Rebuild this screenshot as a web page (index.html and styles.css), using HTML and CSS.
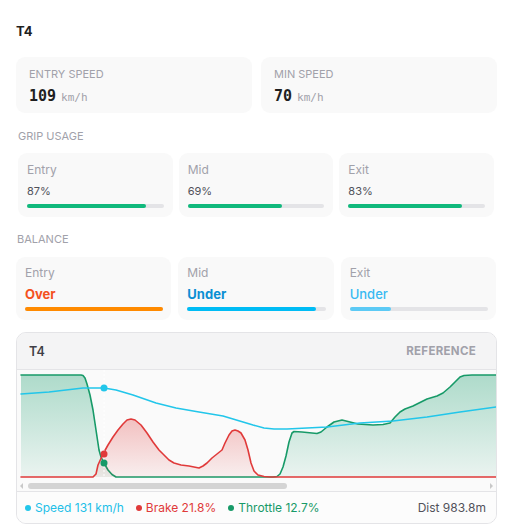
FILE: index.html
```html
<!DOCTYPE html>
<html lang="en">

<head>
    <meta charset="UTF-8">
    <title>T4 corner</title>
    <link rel="stylesheet" href="styles.css">
</head>

<body>
    <div class="page">
        <h2 class="corner-title">T4</h2>

        <div class="stats">
            <div class="stat-card">
                <div class="stat-label">ENTRY SPEED</div>
                <div class="stat-value"><b>109</b><span>km/h</span></div>
            </div>
            <div class="stat-card">
                <div class="stat-label">MIN SPEED</div>
                <div class="stat-value"><b>70</b><span>km/h</span></div>
            </div>
        </div>

        <div class="section-label">GRIP USAGE</div>
        <div class="grip-grid">
            <div class="mini-card">
                <div class="mini-label">Entry</div>
                <div class="grip-pct">87%</div>
                <div class="bar"><div class="fill green" style="width: 87%"></div></div>
            </div>
            <div class="mini-card">
                <div class="mini-label">Mid</div>
                <div class="grip-pct">69%</div>
                <div class="bar"><div class="fill green" style="width: 69%"></div></div>
            </div>
            <div class="mini-card">
                <div class="mini-label">Exit</div>
                <div class="grip-pct">83%</div>
                <div class="bar"><div class="fill green" style="width: 83%"></div></div>
            </div>
        </div>

        <div class="section-label balance-label">BALANCE</div>
        <div class="balance-grid">
            <div class="mini-card">
                <div class="mini-label">Entry</div>
                <div class="balance-value over">Over</div>
                <div class="bar"><div class="fill orange" style="width: 100%"></div></div>
            </div>
            <div class="mini-card">
                <div class="mini-label">Mid</div>
                <div class="balance-value under">Under</div>
                <div class="bar"><div class="fill blue" style="width: 93%"></div></div>
            </div>
            <div class="mini-card">
                <div class="mini-label">Exit</div>
                <div class="balance-value under-light">Under</div>
                <div class="bar"><div class="fill light-blue" style="width: 30%"></div></div>
            </div>
        </div>

        <div class="chart-card">
            <div class="chart-head">
                <span class="chart-name">T4</span>
                <span class="chart-ref">REFERENCE</span>
            </div>
            <div class="chart-plot">
                <svg width="479" height="111" viewBox="0 0 479 111">
                    <defs>
                        <linearGradient id="greenFill" gradientUnits="userSpaceOnUse" x1="0" y1="5" x2="0" y2="107">
                            <stop offset="0" stop-color="#1a9e6e" stop-opacity="0.34" />
                            <stop offset="1" stop-color="#1a9e6e" stop-opacity="0.07" />
                        </linearGradient>
                        <linearGradient id="redFill" gradientUnits="userSpaceOnUse" x1="0" y1="49" x2="0" y2="107">
                            <stop offset="0" stop-color="#e03a3a" stop-opacity="0.3" />
                            <stop offset="1" stop-color="#e03a3a" stop-opacity="0.06" />
                        </linearGradient>
                    </defs>

                    <!-- throttle -->
                    <polygon fill="url(#greenFill)" points="4,107 4,5 64,5 66,5.5 68,8 70,14 73,25 76,40 79,60 82,80 84,87 87,93 91,100 95,104.5 99,107 256,107 260,106.5 263,104 266,97 269,86 272,72 275,63 277,61.5 285,62 300,63.5 304,62 310,57 317,52 325,50 333,52 341,54 356,55 366,54.5 373,53 378,47 383,42 388,39 396,36 404,32 410,29 420,26 426,23 433,17 438,12 443,7 447,5.5 455,5 479,5 479,107" />
                    <polyline class="line-green" points="4,5 64,5 66,5.5 68,8 70,14 73,25 76,40 79,60 82,80 84,87 87,93 91,100 95,104.5 99,107 256,107 260,106.5 263,104 266,97 269,86 272,72 275,63 277,61.5 285,62 300,63.5 304,62 310,57 317,52 325,50 333,52 341,54 356,55 366,54.5 373,53 378,47 383,42 388,39 396,36 404,32 410,29 420,26 426,23 433,17 438,12 443,7 447,5.5 455,5 479,5" />

                    <!-- brake -->
                    <polygon fill="url(#redFill)" points="76,107 79,104 81,95 86,84 91,75 96,67 101,60 106,54 110,50 114,49 118,50 124,55 130,63 136,72 142,80 147,85 152,90 157,93 164,95 172,96 182,98 186,96 190,93 195,88 200,84 205,80 208,73 212,65 215,61 218,60 221,61 224,63 228,70 231,80 234,93 237,101 241,105 247,106.5 253,107" />
                    <polyline class="line-red" points="4,107 76,107 79,104 81,95 86,84 91,75 96,67 101,60 106,54 110,50 114,49 118,50 124,55 130,63 136,72 142,80 147,85 152,90 157,93 164,95 172,96 182,98 186,96 190,93 195,88 200,84 205,80 208,73 212,65 215,61 218,60 221,61 224,63 228,70 231,80 234,93 237,101 241,105 247,106.5 253,107 479,107" />

                    <!-- speed -->
                    <polyline class="line-speed" points="4,24 32,22 66,18 87,18 99,20 116,25 139,33 159,38 182,42 206,46 216,49 226,52 236,55 247,58 257,59 270,59 290,58 310,57 343,53 376,51 410,47 443,42 479,37" />

                    <line class="cursor" x1="87" y1="0" x2="87" y2="107" />
                    <circle cx="87" cy="18" r="3.5" fill="#22c6ea" />
                    <circle cx="87" cy="84" r="3.5" fill="#e03a3a" />
                    <circle cx="87" cy="93" r="3.5" fill="#179a68" />
                </svg>
            </div>
            <div class="chart-scroll">
                <span class="arrow-left"></span>
                <div class="scroll-track"><div class="scroll-thumb"></div></div>
                <span class="arrow-right"></span>
            </div>
            <div class="chart-legend">
                <span class="legend-item speed"><i></i>Speed 131 km/h</span>
                <span class="legend-item brake"><i></i>Brake 21.8%</span>
                <span class="legend-item throttle"><i></i>Throttle 12.7%</span>
                <span class="legend-dist">Dist 983.8m</span>
            </div>
        </div>
    </div>
</body>

</html>
```

FILE: styles.css
```css
body {
    margin: 0;
    font-family: Inter, "Noto Sans", sans-serif;
    background: #ffffff;
    color: #222;
}

.page {
    width: 481px;
    padding: 23px 0 0 16px;
}

.corner-title {
    margin: 0;
    font-size: 13px;
    line-height: 16px;
    font-weight: 700;
    color: #1f1f1f;
}

.stats {
    display: grid;
    grid-template-columns: 1fr 1fr;
    gap: 9px;
    margin-top: 18px;
}

.stat-card {
    background: #f9f9f9;
    border-radius: 9px;
    padding: 10px 13px 8px;
    height: 38px;
}

.stat-label {
    font-size: 11px;
    line-height: 14px;
    color: #a1a1aa;
}

.stat-value {
    display: flex;
    align-items: baseline;
    gap: 5px;
    margin-top: 6px;
    line-height: 18px;
    font-family: "DejaVu Sans Mono", "Liberation Mono", monospace;
}

.stat-value b {
    font-size: 15px;
    font-weight: 700;
    color: #1f1f1f;
}

.stat-value span {
    font-size: 11px;
    color: #a1a1aa;
}

.section-label {
    margin: 16px 0 0 2px;
    font-size: 11px;
    line-height: 14px;
    color: #a1a1aa;
}

.balance-label {
    margin: 15px 0 0 1px;
}

.grip-grid {
    display: grid;
    grid-template-columns: repeat(3, 1fr);
    gap: 6px;
    margin: 10px 3px 0 2px;
}

.balance-grid {
    display: grid;
    grid-template-columns: repeat(3, 1fr);
    gap: 7px;
    margin: 11px 1px 0 0;
}

.mini-card {
    background: #f9f9f9;
    border-radius: 9px;
    padding: 9px 9px 9px 9px;
}

.balance-grid .mini-card {
    padding: 8px 8px 9px 9px;
}

.mini-label {
    font-size: 12px;
    line-height: 15px;
    color: #a1a1aa;
}

.grip-pct {
    margin-top: 7px;
    font-size: 11px;
    line-height: 14px;
    color: #52525b;
}

.balance-value {
    margin-top: 6px;
    font-size: 13px;
    line-height: 16px;
    font-weight: 700;
}

.over {
    color: #f4511e;
}

.under {
    color: #0b8fd3;
}

.under-light {
    color: #38b9f2;
    font-weight: 500;
}

.bar {
    height: 4px;
    margin-top: 6px;
    border-radius: 2px;
    background: #e4e4e7;
}

.balance-grid .bar {
    margin-top: 5px;
}

.fill {
    height: 100%;
    border-radius: 2px;
}

.green {
    background: #10b97c;
}

.orange {
    background: #ff8a00;
}

.blue {
    background: #00bcf5;
}

.light-blue {
    background: #5ccaf5;
}

.chart-card {
    margin-top: 12px;
    border: 1px solid #e4e4e7;
    border-radius: 10px;
    overflow: hidden;
    background: #fafafa;
}

.chart-head {
    display: flex;
    justify-content: space-between;
    align-items: center;
    height: 36px;
    padding: 0 20px 0 12px;
    background: #f4f4f5;
    border-bottom: 1px solid #e4e4e7;
}

.chart-name {
    font-size: 12.5px;
    font-weight: 600;
    color: #3f3f46;
}

.chart-ref {
    font-size: 11.5px;
    font-weight: 700;
    letter-spacing: 0.3px;
    color: #a1a1aa;
}

.chart-plot {
    height: 111px;
    background: #fafafa;
}

.chart-plot svg {
    display: block;
}

.line-green,
.line-red,
.line-speed {
    fill: none;
    stroke-width: 1.6;
    stroke-linejoin: round;
    stroke-linecap: round;
}

.line-green {
    stroke: #179a68;
}

.line-red {
    stroke: #e03a3a;
}

.line-speed {
    stroke: #22c6ea;
}

.cursor {
    stroke: #ffffff;
    stroke-width: 1;
    stroke-dasharray: 2 2;
}

.chart-scroll {
    display: flex;
    align-items: center;
    gap: 5px;
    height: 9px;
    padding: 0 3px 1px 3px;
    border-bottom: 1px solid #e4e4e7;
}

.arrow-left {
    width: 0;
    height: 0;
    border-top: 3px solid transparent;
    border-bottom: 3px solid transparent;
    border-right: 3px solid #c8c8c8;
}

.arrow-right {
    width: 0;
    height: 0;
    border-top: 3px solid transparent;
    border-bottom: 3px solid transparent;
    border-left: 3px solid #c8c8c8;
}

.scroll-track {
    flex: 1;
}

.scroll-thumb {
    width: 259px;
    height: 6px;
    border-radius: 3px;
    background: #d4d4d4;
}

.chart-legend {
    display: flex;
    align-items: center;
    height: 31px;
    padding: 0 10px 0 8px;
    font-size: 12px;
    background: #fcfcfc;
}

.legend-item {
    display: flex;
    align-items: center;
    gap: 4px;
    margin-right: 12px;
}

.legend-item i {
    width: 6px;
    height: 6px;
    border-radius: 50%;
}

.speed {
    color: #22bfe8;
}

.speed i {
    background: #22c6ea;
}

.brake {
    color: #e03a3a;
}

.brake i {
    background: #e03a3a;
}

.throttle {
    color: #179a68;
}

.throttle i {
    background: #179a68;
}

.legend-dist {
    margin-left: auto;
    color: #52525b;
}
```
